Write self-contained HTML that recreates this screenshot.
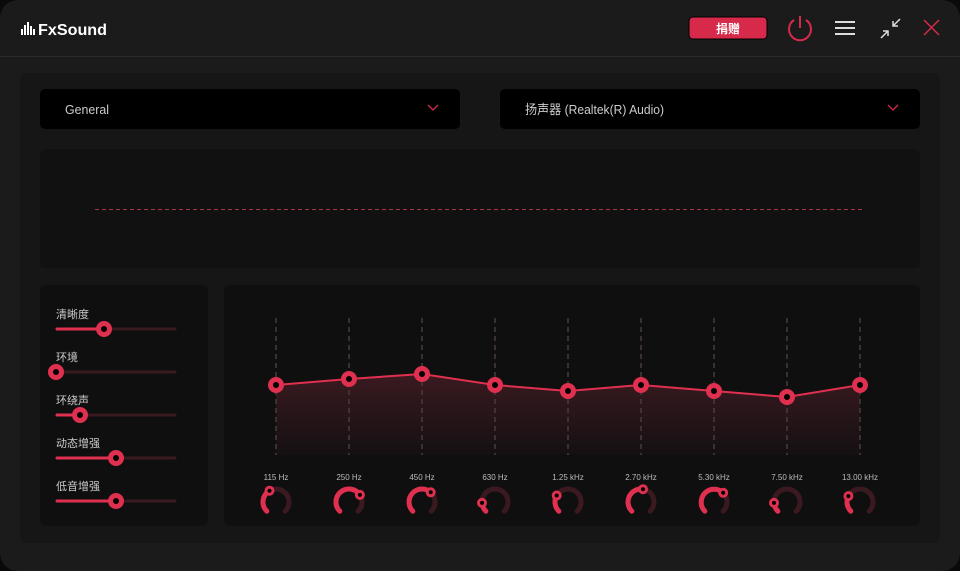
<!DOCTYPE html>
<html><head><meta charset="utf-8">
<style>
*{margin:0;padding:0;box-sizing:border-box}
html,body{width:960px;height:571px;background:#0a0a0a;overflow:hidden;font-family:"Liberation Sans","Noto Sans CJK SC",sans-serif}
svg text{font-family:"Liberation Sans","Noto Sans CJK SC",sans-serif}
</style></head><body>
<svg width="960" height="571" viewBox="0 0 960 571" xmlns="http://www.w3.org/2000/svg">
<defs>
<linearGradient id="fill" x1="0" y1="0" x2="0" y2="1">
<stop offset="0" stop-color="#3a1a20"/><stop offset="1" stop-color="#141012"/>
</linearGradient>
</defs>
<rect x="0" y="0" width="960" height="571" rx="18" fill="#1b1b1b"/>
<line x1="0" y1="56.5" x2="960" y2="56.5" stroke="#2a2a2a"/>
<g fill="#fff">
<rect x="21" y="29" width="2" height="6"/><rect x="24" y="25" width="2" height="10"/><rect x="27" y="22" width="2" height="13"/><rect x="30" y="26" width="2" height="9"/><rect x="33" y="29" width="2" height="6"/>
</g>
<text x="38" y="35" fill="#fff" font-size="16" font-weight="bold" textLength="69" lengthAdjust="spacingAndGlyphs">FxSound</text>
<rect x="689" y="17" width="78" height="22" rx="4" fill="#d72a4a" stroke="#000" stroke-width="1"/>
<text x="728" y="33" fill="#fff" font-size="12" text-anchor="middle" font-weight="bold">捐赠</text>
<path d="M794 20 A11 11 0 1 0 806 20" fill="none" stroke="#d72a4a" stroke-width="2"/>
<line x1="800" y1="16" x2="800" y2="28" stroke="#d72a4a" stroke-width="2"/>
<g stroke="#ddd" stroke-width="2"><line x1="835" y1="22" x2="855" y2="22"/><line x1="835" y1="28" x2="855" y2="28"/><line x1="835" y1="34" x2="855" y2="34"/></g>
<g stroke="#ddd" stroke-width="1.5" fill="none">
<path d="M900 19 L893 26 M893 21 V26 H898"/>
<path d="M881 38 L888 31 M883 31 H888 V36"/>
</g>
<g stroke="#d72a4a" stroke-width="1.5"><line x1="924" y1="20" x2="939" y2="35"/><line x1="939" y1="20" x2="924" y2="35"/></g>

<rect x="20" y="73" width="920" height="470" rx="6" fill="#161616"/>
<rect x="40" y="89" width="420" height="40" rx="5" fill="#000"/>
<text x="65" y="114" fill="#ccc" font-size="13" textLength="44" lengthAdjust="spacingAndGlyphs">General</text>
<path d="M428 105 L433 110 L438 105" fill="none" stroke="#d72a4a" stroke-width="1.3"/>
<rect x="500" y="89" width="420" height="40" rx="5" fill="#000"/>
<text x="525" y="114" fill="#ccc" font-size="13" textLength="139" lengthAdjust="spacingAndGlyphs">扬声器 (Realtek(R) Audio)</text>
<path d="M888 105 L893 110 L898 105" fill="none" stroke="#d72a4a" stroke-width="1.3"/>

<rect x="40" y="149" width="880" height="119" rx="5" fill="#111"/>
<line x1="95" y1="209.5" x2="862" y2="209.5" stroke="#a3344a" stroke-dasharray="4 3"/>

<rect x="40" y="285" width="168" height="241" rx="7" fill="#0f0f0f"/>
<g font-size="11" fill="#ccc">
<text x="56" y="318">清晰度</text>
<text x="56" y="361">环境</text>
<text x="56" y="404">环绕声</text>
<text x="56" y="447">动态增强</text>
<text x="56" y="490">低音增强</text>
</g>
<g stroke-linecap="round" stroke-width="3">
<line x1="57" y1="329" x2="175" y2="329" stroke="#3a1a20"/><line x1="57" y1="329" x2="104" y2="329" stroke="#e0304f"/>
<line x1="57" y1="372" x2="175" y2="372" stroke="#3a1a20"/>
<line x1="57" y1="415" x2="175" y2="415" stroke="#3a1a20"/><line x1="57" y1="415" x2="80" y2="415" stroke="#e0304f"/>
<line x1="57" y1="458" x2="175" y2="458" stroke="#3a1a20"/><line x1="57" y1="458" x2="116" y2="458" stroke="#e0304f"/>
<line x1="57" y1="501" x2="175" y2="501" stroke="#3a1a20"/><line x1="57" y1="501" x2="116" y2="501" stroke="#e0304f"/>
</g>
<g fill="#000" stroke="#e0304f" stroke-width="5">
<circle cx="104" cy="329" r="5.5"/><circle cx="56" cy="372" r="5.5"/><circle cx="80" cy="415" r="5.5"/><circle cx="116" cy="458" r="5.5"/><circle cx="116" cy="501" r="5.5"/>
</g>

<rect x="224" y="285" width="696" height="241" rx="7" fill="#0f0f0f"/>
<path d="M276 385 L349 379 L422 374 L495 385 L568 391 L641 385 L714 391 L787 397 L860 385 L860 455 L276 455 Z" fill="url(#fill)"/>
<g stroke="#4a3a3e" stroke-width="1.5" stroke-dasharray="5 4">
<line x1="276" y1="318" x2="276" y2="455"/><line x1="349" y1="318" x2="349" y2="455"/><line x1="422" y1="318" x2="422" y2="455"/><line x1="495" y1="318" x2="495" y2="455"/><line x1="568" y1="318" x2="568" y2="455"/><line x1="641" y1="318" x2="641" y2="455"/><line x1="714" y1="318" x2="714" y2="455"/><line x1="787" y1="318" x2="787" y2="455"/><line x1="860" y1="318" x2="860" y2="455"/>
</g>
<polyline points="276,385 349,379 422,374 495,385 568,391 641,385 714,391 787,397 860,385" fill="none" stroke="#e0304f" stroke-width="2"/>
<g fill="#000" stroke="#e0304f" stroke-width="5">
<circle cx="276" cy="385" r="5.5"/><circle cx="349" cy="379" r="5.5"/><circle cx="422" cy="374" r="5.5"/><circle cx="495" cy="385" r="5.5"/><circle cx="568" cy="391" r="5.5"/><circle cx="641" cy="385" r="5.5"/><circle cx="714" cy="391" r="5.5"/><circle cx="787" cy="397" r="5.5"/><circle cx="860" cy="385" r="5.5"/>
</g>
<g font-size="8" fill="#bbb" text-anchor="middle">
<text x="276" y="480">115 Hz</text><text x="349" y="480">250 Hz</text><text x="422" y="480">450 Hz</text><text x="495" y="480">630 Hz</text><text x="568" y="480">1.25 kHz</text><text x="641" y="480">2.70 kHz</text><text x="714" y="480">5.30 kHz</text><text x="787" y="480">7.50 kHz</text><text x="860" y="480">13.00 kHz</text>
</g>
<g fill="none" stroke-width="5" stroke-linecap="round">
<g transform="translate(276,502)"><path d="M-9.19 9.19 A13 13 0 1 1 9.19 9.19" stroke="#3a1a20"/><path d="M-9.19 9.19 A13 13 0 0 1 -6.5 -11.26" stroke="#e0304f"/></g>
<g transform="translate(349,502)"><path d="M-9.19 9.19 A13 13 0 1 1 9.19 9.19" stroke="#3a1a20"/><path d="M-9.19 9.19 A13 13 0 1 1 10.9 -7.08" stroke="#e0304f"/></g>
<g transform="translate(422,502)"><path d="M-9.19 9.19 A13 13 0 1 1 9.19 9.19" stroke="#3a1a20"/><path d="M-9.19 9.19 A13 13 0 0 1 8.7 -9.66" stroke="#e0304f"/></g>
<g transform="translate(495,502)"><path d="M-9.19 9.19 A13 13 0 1 1 9.19 9.19" stroke="#3a1a20"/><path d="M-9.19 9.19 A13 13 0 0 1 -12.97 0.91" stroke="#e0304f"/></g>
<g transform="translate(568,502)"><path d="M-9.19 9.19 A13 13 0 1 1 9.19 9.19" stroke="#3a1a20"/><path d="M-9.19 9.19 A13 13 0 0 1 -11.26 -6.5" stroke="#e0304f"/></g>
<g transform="translate(641,502)"><path d="M-9.19 9.19 A13 13 0 1 1 9.19 9.19" stroke="#3a1a20"/><path d="M-9.19 9.19 A13 13 0 0 1 2.03 -12.84" stroke="#e0304f"/></g>
<g transform="translate(714,502)"><path d="M-9.19 9.19 A13 13 0 1 1 9.19 9.19" stroke="#3a1a20"/><path d="M-9.19 9.19 A13 13 0 0 1 9.19 -9.19" stroke="#e0304f"/></g>
<g transform="translate(787,502)"><path d="M-9.19 9.19 A13 13 0 1 1 9.19 9.19" stroke="#3a1a20"/><path d="M-9.19 9.19 A13 13 0 0 1 -12.97 0.91" stroke="#e0304f"/></g>
<g transform="translate(860,502)"><path d="M-9.19 9.19 A13 13 0 1 1 9.19 9.19" stroke="#3a1a20"/><path d="M-9.19 9.19 A13 13 0 0 1 -11.58 -5.9" stroke="#e0304f"/></g>
</g>
<g fill="#000" stroke="#e0304f" stroke-width="3">
<circle cx="269.5" cy="490.7" r="3.5"/><circle cx="359.9" cy="494.9" r="3.5"/><circle cx="430.7" cy="492.3" r="3.5"/><circle cx="482" cy="502.9" r="3.5"/><circle cx="556.7" cy="495.5" r="3.5"/><circle cx="643" cy="489.2" r="3.5"/><circle cx="723.2" cy="492.8" r="3.5"/><circle cx="774" cy="502.9" r="3.5"/><circle cx="848.4" cy="496.1" r="3.5"/>
</g>
</svg>
</body></html>
